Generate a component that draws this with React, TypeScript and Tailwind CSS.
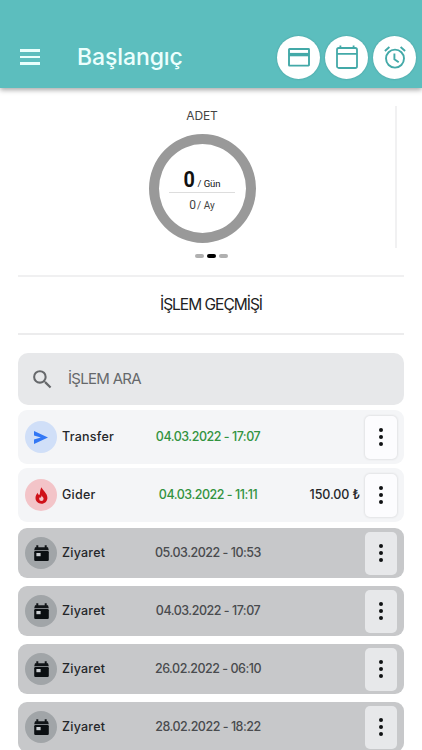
import React from 'react';
import { MdSearch } from 'react-icons/md';

/* ================= TYPES ================= */

type Kind = 'transfer' | 'expense' | 'visit';

interface HistoryItem {
  id: number;
  kind: Kind;
  title: string;
  date: string;
  amount?: string;
}

/* ================= DATA ================= */

const items: HistoryItem[] = [
  { id: 1, kind: 'transfer', title: 'Transfer', date: '04.03.2022 - 17:07' },
  { id: 2, kind: 'expense', title: 'Gider', date: '04.03.2022 - 11:11', amount: '150.00 ₺' },
  { id: 3, kind: 'visit', title: 'Ziyaret', date: '05.03.2022 - 10:53' },
  { id: 4, kind: 'visit', title: 'Ziyaret', date: '04.03.2022 - 17:07' },
  { id: 5, kind: 'visit', title: 'Ziyaret', date: '26.02.2022 - 06:10' },
  { id: 6, kind: 'visit', title: 'Ziyaret', date: '28.02.2022 - 18:22' },
];

/* ================= ICONS ================= */

const CardIcon = () => (
  <svg width="22" height="19" viewBox="0 0 22 19" fill="none" stroke="#43a9a8">
    <rect x="1" y="1" width="20" height="16.6" rx="0.5" strokeWidth="1.9" />
    <path d="M1 6.6h20" strokeWidth="3.4" />
  </svg>
);

const CalendarIcon = () => (
  <svg width="22" height="24" viewBox="0 0 22 24" fill="none" stroke="#43a9a8" strokeWidth="1.8">
    <rect x="1" y="3" width="20" height="20" rx="1.8" />
    <path d="M1 8.8h20M4.4 0.4v2.8M17.6 0.4v2.8" />
  </svg>
);

const AlarmIcon = () => (
  <svg width="22" height="23" viewBox="0 0 22 23" fill="none" stroke="#43a9a8" strokeWidth="1.9">
    <circle cx="11" cy="12.6" r="9" />
    <path d="M10.4 7.6v5.6l4.3 3.1M0.9 5 5.4 1M21.1 5l-4.5-4" />
  </svg>
);

const SendIcon = () => (
  <svg width="14" height="13" viewBox="0 0 14 13" fill="#3277f5">
    <path d="M0 0 14 6.5 0 13V8.4L6.8 6.5 0 4.6z" />
  </svg>
);

const FlameIcon = () => (
  <svg width="13" height="17" viewBox="0 0 13 17">
    <path
      d="M6.6 0.2C7 2.8 12.6 6.1 12.4 10.9c-0.1 3.4-2.6 5.8-5.9 5.8S0.5 14.3 0.5 11c0-2 0.8-3.9 2.2-5.3 0.1 1.3 0.7 2 1.6 2.1C5.5 7.8 4.3 3.4 6.6 0.2z"
      fill="#cf1118"
    />
    <path d="M6.6 8.2c0.4 1.3 2 2 2 3.5a2.2 2.2 0 0 1-4.4 0c0-0.4 0.1-0.8 0.3-1.1 1.3 0.6 2-0.7 2.1-2.4z" fill="#f3c4c8" />
  </svg>
);

const VisitIcon = () => (
  <svg width="15" height="16" viewBox="0 0 15 16">
    <path d="M1 2.2h1.3V0.2h2v2h6.4v-2h2v2H14L14.8 5.2H0.2z" fill="#111518" />
    <rect x="0.2" y="6" width="14.6" height="10" rx="1.2" fill="#0b0f12" />
    <rect x="2.4" y="8" width="4.2" height="3.2" fill="#c9cdd0" />
  </svg>
);

/* ================= PARTS ================= */

const rowStyle: Record<Kind, string> = {
  transfer: 'h-[54px] bg-[#f4f5f7]',
  expense: 'h-[54px] bg-[#f4f5f7]',
  visit: 'h-[50px] bg-[#c7c8ca]',
};

const badgeStyle: Record<Kind, string> = {
  transfer: 'bg-[#d0dff8]',
  expense: 'bg-[#f3c4c8]',
  visit: 'bg-[#a1a5a8]',
};

const badgeIcon: Record<Kind, React.ReactNode> = {
  transfer: <SendIcon />,
  expense: <FlameIcon />,
  visit: <VisitIcon />,
};

const RoundButton: React.FC<{ children: React.ReactNode }> = ({ children }) => (
  <button className="flex size-[43px] items-center justify-center rounded-full bg-white shadow-[0_0_2px_rgba(0,60,60,0.25)]">
    {children}
  </button>
);

const HistoryRow: React.FC<{ item: HistoryItem }> = ({ item }) => {
  const isVisit = item.kind === 'visit';

  return (
    <div
      className={`flex shrink-0 items-center rounded-[9px] px-[7px] text-[12.5px] font-medium ${rowStyle[item.kind]}`}
    >
      <div className={`flex size-8 shrink-0 items-center justify-center rounded-full ${badgeStyle[item.kind]}`}>
        {badgeIcon[item.kind]}
      </div>
      <span className="ml-[5px] w-[60px] pt-px tracking-[0.25px] text-[#25272a]">{item.title}</span>
      <span
        className={`w-[172px] whitespace-nowrap pt-px text-center tracking-[-0.48px] ${
          isVisit ? 'text-[#494b4e]' : 'text-[#329340]'
        }`}
      >
        {item.date}
      </span>
      <span className="mr-[5px] -ml-4 flex-1 whitespace-nowrap pt-px text-right tracking-[-0.1px] text-[#25272a]">
        {item.amount}
      </span>
      <button
        className={`flex h-[43px] w-8 shrink-0 flex-col items-center justify-center gap-[3px] rounded-[5px] ${
          isVisit ? 'bg-[#e7e8ea]' : 'bg-[#fcfcfe] shadow-[0_0_2px_1px_rgba(0,0,0,0.07)]'
        }`}
      >
        <i className="size-1 rounded-full bg-[#101214]" />
        <i className="size-1 rounded-full bg-[#101214]" />
        <i className="size-1 rounded-full bg-[#101214]" />
      </button>
    </div>
  );
};

/* ================= COMPONENT ================= */

const App: React.FC = () => {
  const highlighted = items.filter((item) => item.kind !== 'visit');
  const visits = items.filter((item) => item.kind === 'visit');

  return (
    <div className="flex h-[750px] w-[422px] flex-col overflow-hidden bg-white font-[Inter,'Noto_Sans',sans-serif]">
      <header className="z-10 flex h-[88px] shrink-0 items-center bg-[#5cbebe] pl-5 pr-[6px] pt-[26px] shadow-[0_2px_5px_rgba(0,0,0,0.35)]">
        <button className="flex w-5 flex-col gap-1">
          <i className="h-[2.5px] bg-[#e8fffc]" />
          <i className="h-[2.5px] bg-[#e8fffc]" />
          <i className="h-[2.5px] bg-[#e8fffc]" />
        </button>
        <h1 className="-mt-px ml-[37px] text-[23px] leading-7 font-medium tracking-[-0.1px] text-[#ecfffd]">
          Başlangıç
        </h1>
        <div className="ml-auto flex gap-[5px]">
          <RoundButton><CardIcon /></RoundButton>
          <RoundButton><CalendarIcon /></RoundButton>
          <RoundButton><AlarmIcon /></RoundButton>
        </div>
      </header>

      {/* Counter slide */}
      <section className="mx-[18px] flex h-[189px] shrink-0 border-b-2 border-[#f0f0f1]">
        <div className="flex flex-1 flex-col items-center">
          <h2 className="mt-[20px] mr-[9px] text-[12px] leading-4 tracking-[-0.1px] text-[#444]">ADET</h2>
          <div className="mt-[10px] mr-[9px] flex h-[109px] w-[107px] flex-col items-center justify-center rounded-[50%] border-[10px] border-[#999] pt-[7px]">
            <div className="flex h-[25px] w-[66px] items-baseline justify-center border-b border-[#ddd] text-[#111]">
              <b className="inline-block w-3 scale-x-90 font-[Roboto,sans-serif] text-[22px] leading-[24px] font-bold">0</b>
              <span className="ml-[2px] font-[Roboto,sans-serif] text-[9.5px]">/ Gün</span>
            </div>
            <div className="flex h-[24px] items-baseline font-[Roboto,sans-serif] text-[#444]">
              <span className="text-[12px] leading-[24px]">0</span>
              <span className="ml-px text-[10px]">/ Ay</span>
            </div>
          </div>
          <div className="mt-[11px] flex gap-[3px] self-center pl-[9px]">
            <i className="h-[4px] w-[9px] rounded-full bg-[#b0b0b0]" />
            <i className="h-[4px] w-[9px] rounded-full bg-black" />
            <i className="h-[4px] w-[9px] rounded-full bg-[#b0b0b0]" />
          </div>
        </div>
        <div className="mt-[18px] mr-[7px] h-[142px] w-[2px] bg-[#f1f1f2]" />
      </section>

      <h2 className="mx-[18px] flex h-[58px] shrink-0 items-center justify-center border-b-2 border-[#ececed] text-[15.5px] tracking-[-1px] text-[#222]">
        İŞLEM GEÇMİŞİ
      </h2>

      {/* History list */}
      <main className="mx-[18px] mt-[18px] flex flex-col">
        <div className="flex h-[52px] shrink-0 items-center rounded-[10px] bg-[#e7e8ea] pl-[12px] text-[#66686b]">
          <MdSearch size={25} />
          <span className="ml-[13px] text-[15px] tracking-[-0.7px]">İŞLEM ARA</span>
        </div>
        <div className="mt-[5px] flex flex-col gap-1">
          {highlighted.map((item) => (
            <HistoryRow key={item.id} item={item} />
          ))}
        </div>
        <div className="mt-[6px] flex flex-col gap-2">
          {visits.map((item) => (
            <HistoryRow key={item.id} item={item} />
          ))}
        </div>
      </main>
    </div>
  );
};

export default App;
